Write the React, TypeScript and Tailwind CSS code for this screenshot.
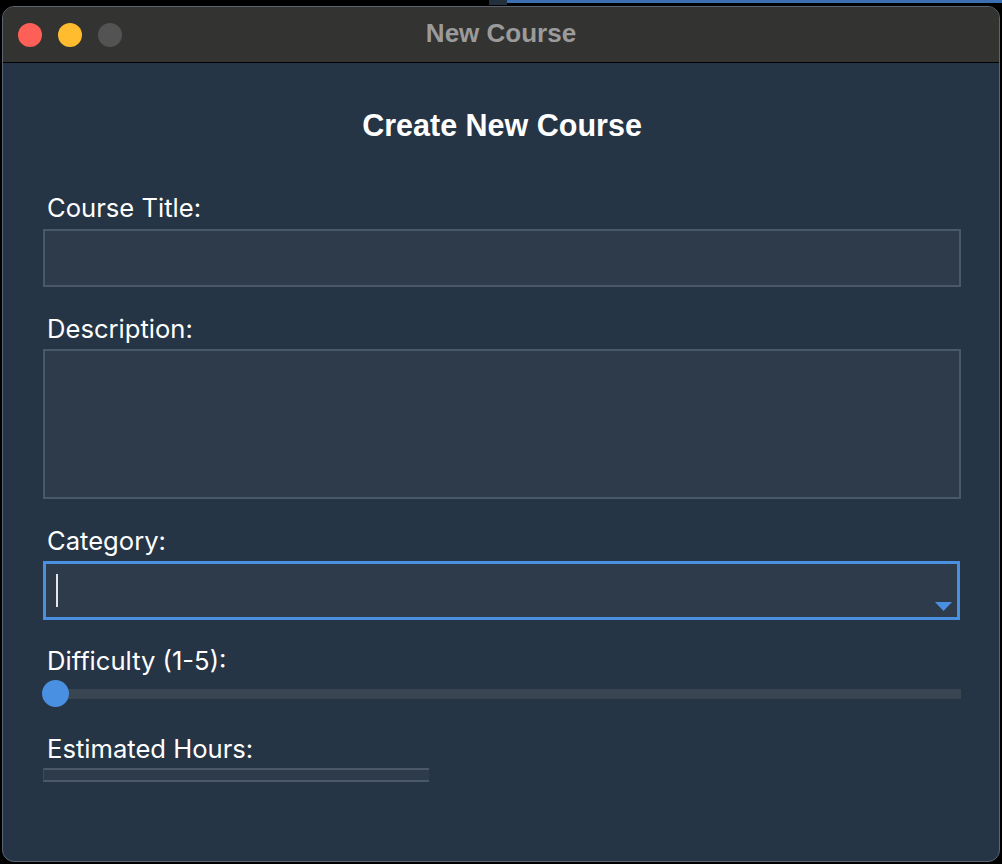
import React from "react";

const Label = ({ children }: { children: React.ReactNode }) => (
  <div className="text-[25.6px] leading-[28px] text-white pl-[4px] font-['Inter',sans-serif]">{children}</div>
);

export default function App() {
  return (
    <div className="w-[1002px] h-[864px] bg-black pt-[6px] px-[2px] pb-[2px] relative overflow-hidden">
      {/* stray bits of the desktop behind the window */}
      <div className="absolute top-0 left-[489px] w-[18px] h-[5px] bg-[#22303e]" />
      <div className="absolute top-0 left-[507px] right-0 h-[3px] bg-[#3b6fb3]" />

      <div className="relative h-full rounded-[12px] border border-[#5b6470] overflow-hidden flex flex-col bg-[#263545]">
        {/* title bar */}
        <div className="h-[56px] shrink-0 bg-[#333331] border-b border-black grid grid-cols-[1fr_auto_1fr] items-center">
          <div className="flex items-center gap-[16px] pl-[15px]">
            <span className="w-[24px] h-[24px] rounded-full bg-[#fe5f57]" />
            <span className="w-[24px] h-[24px] rounded-full bg-[#febc2e]" />
            <span className="w-[24px] h-[24px] rounded-full bg-[#535353]" />
          </div>
          <div className="text-[26px] font-bold text-[#9b9b9b] font-['Liberation_Sans',Arial,sans-serif] leading-none pb-[4px]">
            New Course
          </div>
          <div />
        </div>

        {/* form */}
        <div className="flex flex-col pl-[40px] pr-[38px]">
          <h1 className="mt-[44px] h-[36px] text-center text-[30.5px] leading-[36px] font-bold text-white font-['Liberation_Sans',Arial,sans-serif]">
            Create New Course
          </h1>

          <div className="mt-[51px]">
            <Label>Course Title:</Label>
          </div>
          <div className="mt-[7px] h-[58px] bg-[#2d3b4b] border-2 border-[#4a5867]" />

          <div className="mt-[28px]">
            <Label>Description:</Label>
          </div>
          <div className="mt-[6px] h-[150px] bg-[#2d3b4b] border-2 border-[#4a5867]" />

          <div className="mt-[28px]">
            <Label>Category:</Label>
          </div>
          <div className="mt-[6px] h-[59px] bg-[#2d3b4b] border-[3px] border-[#4a90e2] relative flex items-center pl-[10px] mr-[1px]">
            <span className="w-[2px] h-[33px] bg-[#e6e6e6]" />
            <svg className="absolute right-[5px] bottom-[6px]" width="17" height="9" viewBox="0 0 17 9">
              <polygon points="0,0 17,0 8.5,9" fill="#4a90e2" />
            </svg>
          </div>

          <div className="mt-[27px]">
            <Label>Difficulty (1-5):</Label>
          </div>
          <div className="mt-[5px] h-[27px] relative flex items-center">
            <div className="w-full h-[10px] bg-[#3a4552]" />
            <span className="absolute left-[-1px] top-0 w-[27px] h-[27px] rounded-full bg-[#4a90e2]" />
          </div>

          <div className="mt-[28px]">
            <Label>Estimated Hours:</Label>
          </div>
          <div className="mt-[5px] w-[386px] h-[14px] bg-[#2d3b4b] border-y-2 border-[#4a5867] border-l border-l-[#3c4a59]" />
        </div>
      </div>
    </div>
  );
}
